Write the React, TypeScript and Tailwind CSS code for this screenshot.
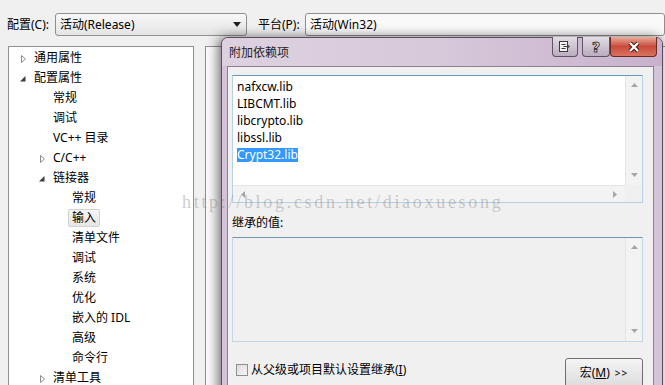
import type { ReactNode } from 'react';

type TreeNode = { label: string; level: number; exp?: 'open' | 'closed'; selected?: boolean };

const TREE: TreeNode[] = [
  { label: '通用属性', level: 0, exp: 'closed' },
  { label: '配置属性', level: 0, exp: 'open' },
  { label: '常规', level: 1 },
  { label: '调试', level: 1 },
  { label: 'VC++ 目录', level: 1 },
  { label: 'C/C++', level: 1, exp: 'closed' },
  { label: '链接器', level: 1, exp: 'open' },
  { label: '常规', level: 2 },
  { label: '输入', level: 2, selected: true },
  { label: '清单文件', level: 2 },
  { label: '调试', level: 2 },
  { label: '系统', level: 2 },
  { label: '优化', level: 2 },
  { label: '嵌入的 IDL', level: 2 },
  { label: '高级', level: 2 },
  { label: '命令行', level: 2 },
  { label: '清单工具', level: 1, exp: 'closed' },
];

const INDENT = ['pl-[9px]', 'pl-[28px]', 'pl-[47px]'];

const LIBS = ['nafxcw.lib', 'LIBCMT.lib', 'libcrypto.lib', 'libssl.lib', 'Crypt32.lib'];

function Expander({ kind }: { kind?: 'open' | 'closed' }) {
  return (
    <svg width="16" height="20" viewBox="0 0 16 20" className="shrink-0">
      {kind === 'closed' && <polygon points="3.5,7.5 3.5,14.5 7.5,11" fill="#fff" stroke="#8c8c8c" />}
      {kind === 'open' && <polygon points="7.5,8 7.5,13.5 2,13.5" fill="#3b3b3b" />}
    </svg>
  );
}

function Arrow({ dir }: { dir: 'up' | 'down' | 'left' | 'right' }) {
  const pts = {
    up: '0,4 7,4 3.5,0',
    down: '0,0 7,0 3.5,4',
    left: '4,0 4,7 0,3.5',
    right: '0,0 0,7 4,3.5',
  }[dir];
  const v = dir === 'up' || dir === 'down';
  return (
    <svg width={v ? 7 : 4} height={v ? 4 : 7} viewBox={v ? '0 0 7 4' : '0 0 4 7'}>
      <polygon points={pts} fill="#a6a6a6" />
    </svg>
  );
}

function Combo({ children, className }: { children: ReactNode; className: string }) {
  return (
    <div className={`flex h-[23px] shrink-0 items-center rounded-[3px] border border-[#8e8f8f] pl-[4px] ${className}`}>
      {children}
    </div>
  );
}

function TitleButton({ children, className }: { children: ReactNode; className: string }) {
  return (
    <div className={`flex h-[20px] items-center justify-center rounded-b-[4px] border border-t-0 border-[#5e5464] ${className}`}>
      {children}
    </div>
  );
}

function VScroll({ top, bottom }: { top: string; bottom: string }) {
  return (
    <div className="flex w-[17px] flex-col items-center justify-between border-l border-[#e4e4e4] bg-[#f3f3f3]">
      <div className={top}><Arrow dir="up" /></div>
      <div className={bottom}><Arrow dir="down" /></div>
    </div>
  );
}

export default function App() {
  return (
    <div className="relative h-[385px] w-[665px] overflow-hidden bg-[#f0f0f0] font-['Noto_Sans','Noto_Sans_CJK_SC',sans-serif] text-[12px] leading-[14px] text-black">
      {/* config / platform row */}
      <div className="flex items-center pl-[7px] pt-[13px]">
        <span className="w-[55px]">配置(C):</span>
        <Combo className="w-[192px] justify-between bg-gradient-to-b from-[#f8f8f8] to-[#e4e4e4] pr-[5px]">
          <span>活动(Release)</span>
          <svg width="8" height="5" viewBox="0 0 8 5"><polygon points="0,0 8,0 4,5" fill="#202020" /></svg>
        </Combo>
        <span className="ml-[11px] w-[54px]">平台(P):</span>
        <Combo className="w-[360px] bg-[#f9f9f9]">
          <span>活动(Win32)</span>
        </Combo>
      </div>

      {/* panels */}
      <div className="mt-[10px] flex h-[340px] pl-[8px]">
        <div className="w-[186px] shrink-0 border border-b-0 border-[#8e8f8f] bg-white pt-px">
          {TREE.map((n, i) => (
            <div key={i} className={`flex h-[20px] items-center ${INDENT[n.level]}`}>
              <Expander kind={n.exp} />
              {n.selected ? (
                <span className="-ml-[4px] rounded-[2px] border border-[#d2d2d2] bg-gradient-to-b from-[#f6f6f6] to-[#e6e6e6] px-[3px] leading-[16px]">
                  {n.label}
                </span>
              ) : (
                <span>{n.label}</span>
              )}
            </div>
          ))}
        </div>
        <div className="ml-[11px] flex-1 border-l border-t border-[#8e8f8f] bg-[#fbfbfb]" />
      </div>

      {/* dialog window */}
      <div className="absolute left-[221px] top-[37px] flex h-[360px] w-[442px] flex-col rounded-t-[7px] border border-[#5b4d61] bg-[#d5c3d9] shadow-[-3px_0_12px_rgba(0,0,0,0.55)]">
        <div className="flex h-[28px] items-start justify-between rounded-t-[6px] bg-gradient-to-r from-[#ddd1df] via-[#d7c8da] to-[#c8b1cc] pr-[5px]">
          <span className="pl-[7px] pt-[8px] text-[#1e1e1e]">附加依赖项</span>
          <div className="-mt-px flex">
            <TitleButton className="w-[26px] bg-gradient-to-b from-[#e4dde7] to-[#b9adbf]">
              <svg width="12" height="11" viewBox="0 0 12 11">
                <rect x="0.5" y="0.5" width="8" height="10" fill="#f2f2f2" stroke="#3a3a3a" />
                <path d="M2.5 3.5h4M2.5 7.5h4" stroke="#3a3a3a" />
                <path d="M4.5 5.5h5M8 3.5l2.5 2-2.5 2" fill="none" stroke="#3a3a3a" />
              </svg>
            </TitleButton>
            <TitleButton className="ml-[4px] w-[28px] bg-gradient-to-b from-[#e4dde7] to-[#b9adbf]">
              <span className="font-['DejaVu_Sans',sans-serif] text-[14px] font-bold text-[#f4f4f4] [-webkit-text-stroke:1px_#3c3c3c]">?</span>
            </TitleButton>
            <TitleButton className="w-[47px] border-[#6a2a22] bg-gradient-to-b from-[#e8ab9c] via-[#c94a3c] to-[#d9735f]">
              <svg width="14" height="12" viewBox="0 0 14 12">
                <path d="M3 2L11 10M11 2L3 10" stroke="#4a1a14" strokeWidth="4.5" />
                <path d="M3 2L11 10M11 2L3 10" stroke="#fff" strokeWidth="2.3" />
              </svg>
            </TitleButton>
          </div>
        </div>

        <div className="ml-[5px] mr-[8px] flex flex-1 flex-col border border-[#8f7f95] bg-[#f0f0f0] pl-[4px]">
          {/* dependency list */}
          <div className="mt-[8px] flex h-[128px] w-[411px] flex-col border border-[#b6d0e4] border-t-[#6e96b8]">
            <div className="flex flex-1">
              <div className="flex-1 bg-white pl-[4px] pt-[2px]">
                {LIBS.map((l, i) => (
                  <div key={l} className="flex h-[17px] items-center">
                    {i === LIBS.length - 1 ? (
                      <span className="bg-[#3399ff] text-white">{l}</span>
                    ) : (
                      <span>{l}</span>
                    )}
                  </div>
                ))}
              </div>
              <VScroll top="pt-[7px]" bottom="pb-[8px]" />
            </div>
            <div className="flex h-[17px]">
              <div className="flex flex-1 items-center justify-between border-t border-[#e4e4e4] bg-[#f3f3f3] pl-[8px] pr-[8px]">
                <Arrow dir="left" />
                <Arrow dir="right" />
              </div>
              <div className="w-[17px] bg-[#f0f0f0]" />
            </div>
          </div>

          <span className="mt-[13px]">继承的值:</span>

          <div className="mt-[7px] flex h-[105px] w-[411px] border border-[#c4d7e5] border-t-[#7196ae]">
            <div className="flex-1" />
            <VScroll top="pt-[7px]" bottom="pb-[8px]" />
          </div>

          <div className="mt-[16px] flex items-start justify-between pl-[4px] pr-[10px]">
            <label className="mt-[5px] flex items-center">
              <span className="h-[12px] w-[12px] border border-[#8e8f8f] bg-gradient-to-br from-[#dcdcdc] to-[#f6f6f6]" />
              <span className="ml-[3px]">从父级或项目默认设置继承(<span className="underline">I</span>)</span>
            </label>
            <div className="flex h-[30px] w-[78px] items-center justify-center rounded-[3px] border border-[#707070] bg-gradient-to-b from-[#f4f4f4] to-[#dcdcdc]">
              <span>宏(<span className="underline">M</span>)</span>
              <span className="ml-[5px] text-[10px] tracking-[1px]">&gt;&gt;</span>
            </div>
          </div>
        </div>
      </div>

      {/* watermark */}
      <div className="pointer-events-none absolute left-[182px] top-[193px] font-['Liberation_Serif',serif] text-[18px] leading-[18px] tracking-[2.7px] text-[#80808066]">
        http://blog.csdn.net/diaoxuesong
      </div>
    </div>
  );
}
